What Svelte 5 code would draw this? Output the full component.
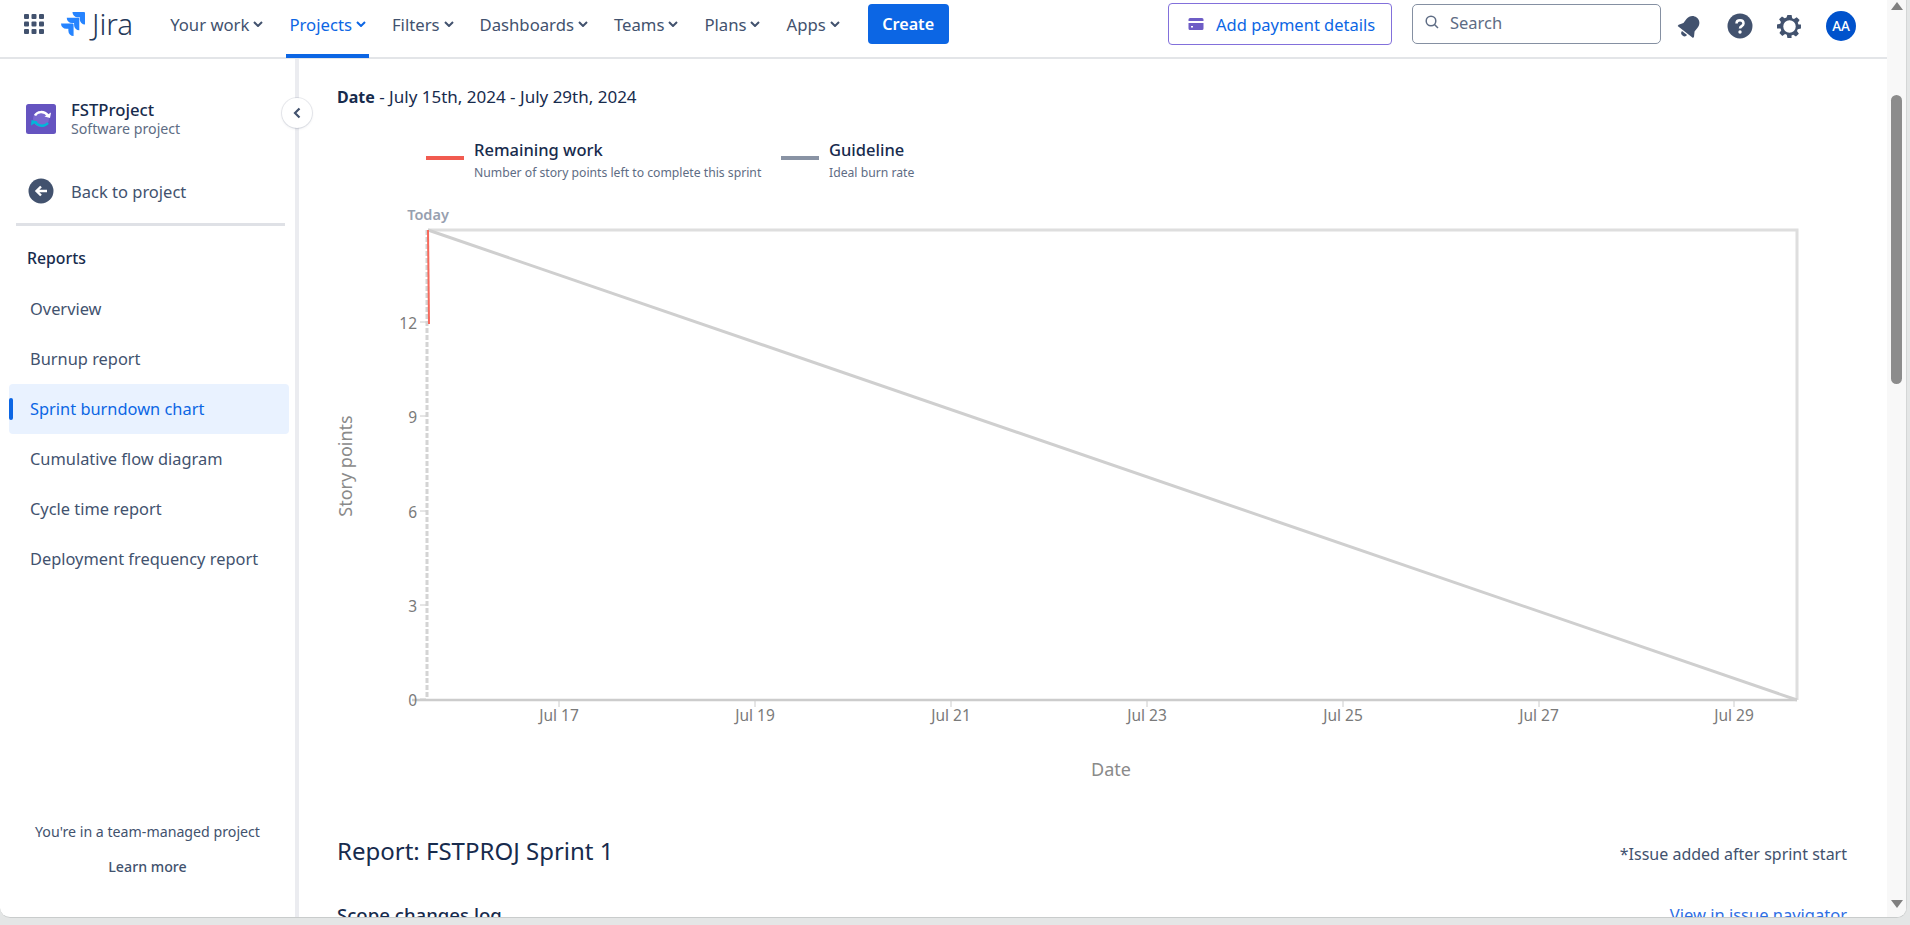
<script>
  const navItems = [
    { label: 'Your work' },
    { label: 'Projects', active: true },
    { label: 'Filters' },
    { label: 'Dashboards' },
    { label: 'Teams' },
    { label: 'Plans' },
    { label: 'Apps' }
  ];
  const reports = ['Overview', 'Burnup report', 'Sprint burndown chart', 'Cumulative flow diagram', 'Cycle time report', 'Deployment frequency report'];
  const yTicks = [[12, 323], [9, 417], [6, 512], [3, 606], [0, 700]];
  const xTicks = [['Jul 17', 559], ['Jul 19', 755], ['Jul 21', 951], ['Jul 23', 1147], ['Jul 25', 1343], ['Jul 27', 1539], ['Jul 29', 1734]];
  const sx = (x) => x - 320;
  const sy = (y) => y - 205;
</script>

<div class="window">
  <div class="page">
    <header class="topbar">
      <div class="left">
        <svg class="grid" viewBox="0 0 20 20" width="20" height="20" aria-hidden="true">
          {#each [0, 7.5, 15] as y}
            {#each [0, 7.5, 15] as x}
              <rect x={x} y={y} width="5" height="5" rx="1" fill="#42526e" />
            {/each}
          {/each}
        </svg>
        <div class="logo">
          <svg viewBox="0 0 24 24" width="24" height="24" aria-hidden="true">
            <path fill="#2684ff" d="M11.571 11.513H0a5.218 5.218 0 0 0 5.232 5.215h2.13v2.057A5.215 5.215 0 0 0 12.575 24V12.518a1.005 1.005 0 0 0-1.005-1.005zm5.723-5.756H5.736a5.215 5.215 0 0 0 5.215 5.214h2.129v2.058a5.218 5.218 0 0 0 5.215 5.214V6.758a1.001 1.001 0 0 0-1.001-1.001zM23.013 0H11.455a5.215 5.215 0 0 0 5.215 5.215h2.129v2.057A5.215 5.215 0 0 0 24 12.483V1.005A1.001 1.001 0 0 0 23.013 0Z" />
          </svg>
          <span class="wordmark">Jira</span>
        </div>
        <nav class="nav">
          {#each navItems as item}
            <div class="nav-item" class:active={item.active}>
              <span>{item.label}</span>
              <svg viewBox="0 0 10 6" width="10" height="6" aria-hidden="true"><path d="M1 1l4 4 4-4" fill="none" stroke="currentColor" stroke-width="2" /></svg>
            </div>
          {/each}
        </nav>
        <button class="create">Create</button>
      </div>
      <div class="right">
        <button class="payment">
          <svg viewBox="0 0 16 14" width="16" height="14" aria-hidden="true">
            <path fill="#6e5dc6" d="M2 1h12a1.500 1.500 0 0 1 1.500 1.500V4H.5V2.500A1.500 1.500 0 0 1 2 1zM.5 6h15v5.500A1.500 1.500 0 0 1 14 13H2a1.500 1.500 0 0 1-1.500-1.500zM3 9v1.500h2V9z" />
          </svg>
          <span>Add payment details</span>
        </button>
        <div class="search">
          <svg viewBox="0 0 16 16" width="16" height="16" aria-hidden="true"><circle cx="7" cy="7" r="4.800" fill="none" stroke="#5e6c84" stroke-width="1.500" /><path d="M10.500 10.500l3.500 3.500" stroke="#5e6c84" stroke-width="1.500" /></svg>
          <span>Search</span>
        </div>
        <div class="icons">
          <svg viewBox="0 0 24 24" width="26" height="26" aria-hidden="true">
            <g transform="rotate(38 12 12)">
              <path fill="#42526e" d="M12 2c-4 0-6.500 3-6.500 7v4.500L3 17.500V19h18v-1.500l-2.500-4V9c0-4-2.500-7-6.500-7z" />
              <path fill="#42526e" d="M9 20.200a3 3 0 0 0 6 0z" />
            </g>
          </svg>
          <svg viewBox="0 0 26 26" width="26" height="26" aria-hidden="true">
            <circle cx="13" cy="13" r="12.500" fill="#42526e" />
            <path d="M9.500 10.500c0-2 1.500-3.200 3.500-3.200s3.500 1.200 3.500 3.100c0 2.800-3.500 2.600-3.500 5.100" fill="none" stroke="#fff" stroke-width="2.500" />
            <circle cx="13" cy="19" r="1.700" fill="#fff" />
          </svg>
          <svg viewBox="0 0 24 24" width="25" height="25" aria-hidden="true">
            <path fill="#42526e" fill-rule="evenodd" d="M10 1h4l.6 3.100 1.700.7 2.600-1.800 2.800 2.800-1.800 2.600.7 1.700L23 10v4l-3.100.6-.7 1.700 1.800 2.600-2.800 2.800-2.600-1.800-1.700.7L14 23h-4l-.6-3.100-1.700-.7-2.600 1.800-2.800-2.800 1.800-2.600-.7-1.700L0 14v-4l3.100-.6.7-1.700L2 5.100l2.800-2.800 2.600 1.800 1.700-.7zM12 6a6 6 0 1 0 0 12 6 6 0 0 0 0-12z" />
          </svg>
          <div class="avatar">AA</div>
        </div>
      </div>
    </header>

    <div class="body">
      <aside class="sidebar">
        <div class="project">
          <svg class="project-icon" viewBox="0 0 30 30" width="30" height="30" aria-hidden="true">
            <rect width="30" height="30" rx="2.500" fill="#6554c0" />
            <circle cx="15" cy="15" r="8" fill="#8777d9" opacity="0.600" />
            <path d="M9 11.500C11 7.500 18 6.500 22 11.500" fill="none" stroke="#fff" stroke-width="2.500" />
            <path d="M18.500 12.500l5.500 1.500 1-5.500" fill="#fff" />
            <path d="M22 19c-3 3.500-9 4-13-1" fill="none" stroke="#00b8d9" stroke-width="2.500" />
            <path d="M11.500 17.500L5.500 16l-.5 5.500z" fill="#00b8d9" />
          </svg>
          <div>
            <div class="p-name">FSTProject</div>
            <div class="p-sub">Software project</div>
          </div>
        </div>
        <div class="back">
          <svg viewBox="0 0 26 26" width="26" height="26" aria-hidden="true">
            <circle cx="13" cy="13" r="12.500" fill="#42526e" />
            <path d="M19 13H9m4-4.500L8.500 13l4.500 4.500" fill="none" stroke="#fff" stroke-width="2.400" />
          </svg>
          <span>Back to project</span>
        </div>
        <div class="divider"></div>
        <div class="reports-title">Reports</div>
        <ul class="menu">
          {#each reports as r, i}
            <li class:selected={i === 2}>{r}</li>
          {/each}
        </ul>
        <div class="foot">
          <div>You're in a team-managed project</div>
          <div class="learn">Learn more</div>
        </div>
        <button class="collapse" aria-label="Collapse">
          <svg viewBox="0 0 8 12" width="8" height="12" aria-hidden="true"><path d="M6.500 1.500L2 6l4.500 4.500" fill="none" stroke="#42526e" stroke-width="2.200" /></svg>
        </button>
      </aside>

      <main class="main">
        <div class="date"><b>Date</b> - July 15th, 2024 - July 29th, 2024</div>
        <div class="legend">
          <div class="lg lg1">
            <i class="swatch red"></i>
            <div><div class="lg-t">Remaining work</div><div class="lg-s">Number of story points left to complete this sprint</div></div>
          </div>
          <div class="lg">
            <i class="swatch grey"></i>
            <div><div class="lg-t">Guideline</div><div class="lg-s">Ideal burn rate</div></div>
          </div>
        </div>
        <svg class="chart" viewBox="0 0 1500 580" width="1500" height="580" role="img">
          <text class="today" x={sx(428)} y={sy(221)} text-anchor="middle">Today</text>
          <path d="M{sx(428)} {sy(231)}H{sx(1797)}V{sy(701)}" fill="none" stroke="#dedede" stroke-width="3" />
          <line x1={sx(412)} x2={sx(1797)} y1={sy(701)} y2={sy(701)} stroke="#ccc" stroke-width="2.500" />
          <line x1={sx(427)} x2={sx(427)} y1={sy(231)} y2={sy(700)} stroke="#d4d4d4" stroke-width="3" stroke-dasharray="5 2" />
          {#each yTicks as [v, y]}
            <line x1={sx(420)} x2={sx(426)} y1={sy(y)} y2={sy(y)} stroke="#ccc" stroke-width="1" />
            <text class="tick" x={sx(417)} y={sy(y) + 7} text-anchor="end">{v}</text>
          {/each}
          {#each xTicks as [l, x]}
            <line x1={sx(x)} x2={sx(x)} y1={sy(702)} y2={sy(708)} stroke="#ccc" stroke-width="1" />
            <text class="tick" x={sx(x)} y={sy(722)} text-anchor="middle">{l}</text>
          {/each}
          <line x1={sx(428)} y1={sy(231)} x2={sx(1797)} y2={sy(701)} stroke="#cfcfcf" stroke-width="3" />
          <line x1={sx(428)} y1={sy(231)} x2={sx(429)} y2={sy(325)} stroke="#f7685b" stroke-width="2" />
          <text class="axis" x={sx(1111)} y={sy(777)} text-anchor="middle">Date</text>
          <text class="axis" transform="translate({sx(352)} {sy(467)}) rotate(-90)" text-anchor="middle">Story points</text>
        </svg>
        <div class="report-row">
          <h2>Report: FSTPROJ Sprint 1</h2>
          <span>*Issue added after sprint start</span>
        </div>
        <div class="scope-row">
          <h3>Scope changes log</h3>
          <span>View in issue navigator</span>
        </div>
      </main>

      <div class="scrollbar">
        <svg class="arrow up" viewBox="0 0 12 8" width="12" height="8" aria-hidden="true"><path d="M6 0l6 8H0z" fill="#808080" /></svg>
        <div class="thumb"></div>
        <svg class="arrow down" viewBox="0 0 12 8" width="12" height="8" aria-hidden="true"><path d="M6 8l6-8H0z" fill="#808080" /></svg>
      </div>
    </div>
  </div>
</div>

<style>
  :global(body) {
    margin: 0;
    background: #dfe3e3;
    font-family: "Noto Sans", "Open Sans", sans-serif;
    color: #172b4d;
    overflow: hidden;
  }
  .window {
    height: 925px;
    width: 1910px;
    background: #e4e6e6;
    box-sizing: border-box;
    padding: 0 3px 7px 0;
  }
  .page {
    height: 100%;
    position: relative;
    background: #fff;
    border-radius: 0 0 10px 10px;
    border-bottom: 1px solid #c9cccc;
    border-right: 1px solid #d4d6d6;
    box-sizing: border-box;
    overflow: hidden;
    display: flex;
    flex-direction: column;
  }
  .topbar {
    height: 59px;
    flex: none;
    box-sizing: border-box;
    border-bottom: 2px solid #e3e5e8;
    display: flex;
    justify-content: space-between;
    margin-right: 19px;
    position: relative;
    z-index: 1;
  }
  .left, .right { display: flex; align-items: flex-start; }
  .grid { margin: 14px 0 0 24px; }
  .logo { display: flex; align-items: center; margin: 12px 0 0 17px; gap: 7px; }
  .wordmark { font-family: "Noto Sans", sans-serif; font-size: 29.500px; font-weight: 300; line-height: 24px; color: #253858; }
  .nav { display: flex; margin-left: 34px; height: 57px; gap: 0; }
  .nav-item {
    display: flex;
    align-items: center;
    height: 48px;
    gap: 4px;
    padding: 0 3px;
    margin-right: 20px;
    font-size: 16.700px;
    color: #42526e;
    box-sizing: border-box;
    position: relative;
  }
  .nav-item.active { color: #0c66e4; }
  .nav-item.active::after {
    content: "";
    position: absolute;
    left: 0;
    right: 0;
    top: 54px;
    height: 4px;
    background: #0c66e4;
  }
  .create {
    margin: 4px 0 0 5px;
    width: 81px;
    height: 40px;
    border: 0;
    border-radius: 4px;
    background: #0c66e4;
    color: #fff;
    font: 600 16.200px "Noto Sans", sans-serif;
  }
  .payment {
    width: 224px;
    height: 42px;
    margin-top: 3px;
    display: flex;
    align-items: center;
    gap: 12px;
    padding: 0 0 0 19px;
    border: 1px solid #8270db;
    border-radius: 4px;
    background: #fff;
    color: #0c66e4;
    font: 400 16.500px "Noto Sans", sans-serif;
    box-sizing: border-box;
  }
  .search {
    width: 249px;
    height: 40px;
    margin: 4px 0 0 20px;
    box-sizing: border-box;
    border: 1px solid #8590a2;
    border-radius: 5px;
    display: flex;
    align-items: center;
    gap: 10px;
    padding: 0 0 4px 11px;
    font-size: 16.500px;
    color: #5e6c84;
  }
  .icons { display: flex; align-items: center; margin: 11px 0 0 16px; gap: 24px; width: 210px; }
  .avatar {
    width: 30px;
    height: 30px;
    border-radius: 50%;
    background: #0052cc;
    color: #fff;
    font-size: 13.500px;
    font-weight: 500;
    display: flex;
    align-items: center;
    justify-content: center;
    margin-left: 0;
  }
  .body { flex: 1; display: flex; min-height: 0; margin-top: -1px; }
  .sidebar {
    width: 299px;
    flex: none;
    box-sizing: border-box;
    border-right: 4px solid #ebecf0;
    position: relative;
    padding: 42px 9px 0;
    display: flex;
    flex-direction: column;
  }
  .project { display: flex; gap: 15px; align-items: center; padding-left: 17px; }
  .project-icon { flex: none; }
  .p-name { font-size: 16.700px; font-weight: 500; line-height: 20px; }
  .p-sub { font-size: 14.200px; line-height: 17px; color: #5e6c84; }
  .back { display: flex; align-items: center; gap: 17px; padding-left: 19px; margin-top: 41px; font-size: 16.500px; color: #42526e; height: 26px; }
  .divider { height: 3px; margin: 19px 1px 0 7px; background: #dfe1e6; }
  .reports-title { margin: 22px 0 0 18px; font-size: 15.800px; font-weight: 500; line-height: 21px; }
  .menu { list-style: none; margin: 15px 0 0; padding: 0; width: 280px; }
  .menu li {
    height: 50px;
    line-height: 50px;
    padding-left: 21px;
    font-size: 16.400px;
    color: #42526e;
    position: relative;
    border-radius: 4px;
    box-sizing: border-box;
    white-space: nowrap;
  }
  .menu li.selected { background: #e9f2ff; color: #0c66e4; }
  .menu li.selected::before {
    content: "";
    position: absolute;
    left: 0;
    top: 14px;
    width: 4px;
    height: 22px;
    border-radius: 2px;
    background: #0c66e4;
  }
  .foot { margin-top: auto; padding-bottom: 41px; text-align: center; font-size: 14.200px; color: #42526e; }
  .learn { margin-top: 16px; font-weight: 500; }
  .collapse {
    position: absolute;
    right: -17px;
    top: 40px;
    width: 30px;
    height: 30px;
    border-radius: 50%;
    border: 0;
    padding: 0;
    background: #fff;
    box-shadow: 0 0 0 1px rgba(9, 30, 66, 0.08), 0 1px 3px rgba(9, 30, 66, 0.1);
    display: flex;
    align-items: center;
    justify-content: center;
    z-index: 2;
  }
  .main { flex: 1; min-width: 0; padding: 27px 0 0 38px; overflow: hidden; position: relative; }
  .date { font-size: 17px; line-height: 24px; color: #172b4d; }
  .date b { font-weight: 700; font-size: 16px; }
  .legend { display: flex; margin: 30px 0 0 89px; }
  .lg { display: flex; gap: 10px; }
  .lg1 { width: 355px; }
  .swatch { width: 38px; height: 4px; margin-top: 17px; flex: none; }
  .swatch.red { background: #f15b50; }
  .swatch.grey { background: #8993a4; }
  .lg-t { font-size: 16.500px; line-height: 22px; font-weight: 500; }
  .lg-s { font-size: 12.200px; line-height: 18px; margin-top: 3px; color: #5e6c84; white-space: nowrap; }
  .chart { display: block; margin: 22px 0 0 -17px; font-family: "Noto Sans", sans-serif; overflow: visible; }
  .today { font-size: 14.500px; font-weight: 600; fill: #97a0af; }
  .tick { font-size: 15.500px; fill: #7a7a7a; }
  .axis { font-size: 18px; fill: #8a8a8a; }
  .report-row { display: flex; justify-content: space-between; align-items: center; width: 1510px; margin-top: 51px; }
  h2 { margin: 0; font-size: 24px; font-weight: 400; line-height: 32px; }
  .report-row span { font-size: 16px; color: #42526e; line-height: 24px; padding-top: 6px; }
  .scope-row { display: flex; justify-content: space-between; width: 1510px; margin-top: 36px; }
  h3 { margin: 0; font-size: 18.600px; font-weight: 500; line-height: 24px; }
  .scope-row span { font-size: 16.500px; color: #2f6fe4; }
  .scrollbar {
    width: 19px;
    flex: none;
    background: #f8f8f8;
    position: relative;
    margin-top: -58px;
  }
  .thumb { position: absolute; left: 4px; top: 95px; width: 11px; height: 289px; border-radius: 6px; background: #8c8c8c; }
  .arrow { position: absolute; left: 4px; }
  .arrow.up { top: 2px; }
  .arrow.down { bottom: 9px; }
</style>
